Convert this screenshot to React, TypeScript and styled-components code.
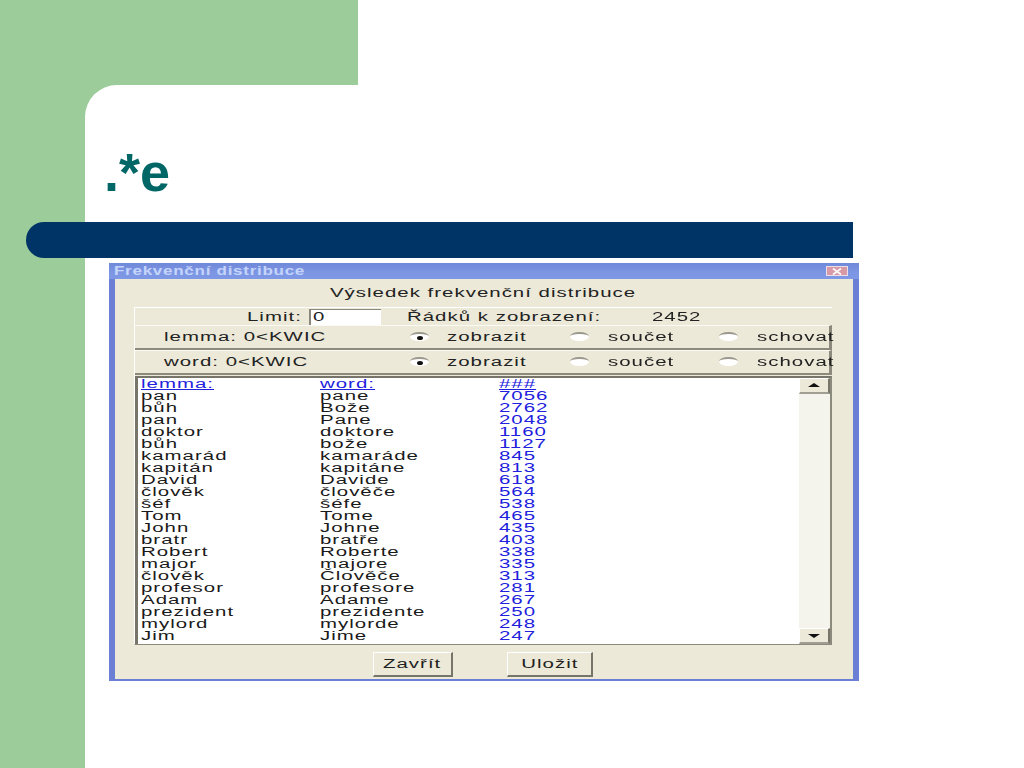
import React from "react";
import styled, { createGlobalStyle } from "styled-components";

const GlobalStyle = createGlobalStyle`
  html, body { margin: 0; padding: 0; background: #9ccc99; }
`;

const Slide = styled.div`
  display: flex;
  width: 1024px;
  height: 768px;
  overflow: hidden;
  background: #9ccc99;
  font-family: "Liberation Sans", Arial, sans-serif;
`;

const Rail = styled.div`
  flex: 0 0 85px;
`;

const Main = styled.div`
  flex: 1;
  display: flex;
  flex-direction: column;
`;

const TopRow = styled.div`
  display: flex;
  height: 85px;
`;

const TopGreen = styled.div`
  flex: 0 0 273px;
`;

const TopWhite = styled.div`
  flex: 1;
  background: #fff;
`;

const Content = styled.div`
  flex: 1;
  background: #fff;
  border-top-left-radius: 32px;
`;

const Heading = styled.h1`
  height: 137px;
  margin: 0;
  padding: 52px 0 0 19px;
  box-sizing: border-box;
  font-size: 54px;
  line-height: 70px;
  font-weight: bold;
  color: #006666;
`;

const Bar = styled.div`
  width: 827px;
  height: 36px;
  margin: 0 0 5px -59px;
  background: #003366;
  border-radius: 18px 0 0 18px;
`;

const Dialog = styled.div`
  width: 750px;
  height: 418px;
  margin-left: 24px;
  box-sizing: border-box;
  padding: 0 6px 2px 6px;
  display: flex;
  flex-direction: column;
  background: #6b80d4;
  filter: blur(0.35px);
`;

const TitleBar = styled.div`
  flex: 0 0 16px;
  margin: 0 -6px;
  padding: 0 11px 0 5px;
  display: flex;
  align-items: center;
  justify-content: space-between;
  background: linear-gradient(180deg, #7088d8, #7d96e4 60%, #7f98e6);
`;

const Text = styled.span<{ $center?: boolean }>`
  display: inline-block;
  white-space: nowrap;
  font-size: 12px;
  line-height: 12px;
  letter-spacing: 0.6px;
  transform: scaleX(1.7);
  transform-origin: ${(p) => (p.$center ? "center" : "left")};
`;

const TitleText = styled(Text)`
  font-weight: bold;
  color: #c4d4fa;
  letter-spacing: 0.5px;
  transform: scaleX(1.42);
`;

const CloseButton = styled.div`
  width: 22px;
  height: 10px;
  display: flex;
  align-items: center;
  justify-content: center;
  background: #d89aa6;
  border: 1px solid #e8dfe8;
  box-sizing: border-box;
`;

const Body = styled.div`
  flex: 1;
  padding: 0 21px 0 19px;
  display: flex;
  flex-direction: column;
  background: #ece9d8;
  color: #222;
`;

const Caption = styled.div`
  height: 28px;
  display: flex;
  align-items: center;
  justify-content: center;
  padding-top: 0;
  box-sizing: border-box;
`;

const Panel = styled.div`
  height: 338px;
  display: flex;
  flex-direction: column;
  box-sizing: border-box;
  border-top: 1px solid #fff;
  border-left: 1px solid #fff;
  border-bottom: 1px solid #8c8a7c;
`;

const LimitRow = styled.div`
  flex: 0 0 17px;
  display: grid;
  grid-template-columns: 112px 62px 72px 26px 245px 1fr;
  align-items: center;
`;

const LimitInput = styled.div`
  height: 16px;
  display: flex;
  align-items: center;
  padding-left: 2px;
  box-sizing: border-box;
  background: #fff;
  border-left: 2px solid #8a887c;
  border-top: 1px solid #8a887c;
`;

const FilterRow = styled.div`
  flex: 0 0 25px;
  display: grid;
  grid-template-columns: 246px 37px 123px 38px 111px 38px 1fr;
  align-items: center;
  box-sizing: border-box;
  padding-left: 29px;
  border-bottom: 2px solid #8c8a7c;
  border-right: 3px solid #8c8a7c;
  border-top: 1px solid #fbfaf4;
`;

const Radio = styled.div<{ $checked?: boolean }>`
  width: 19px;
  height: 9px;
  margin-top: -1px;
  display: flex;
  align-items: center;
  justify-content: center;
  box-sizing: border-box;
  border-radius: 50%;
  background: #fff;
  border-top: 2px solid #9a988c;
  border-left: 2px solid #b0ae a2;
  &::after {
    content: "";
    display: ${(p) => (p.$checked ? "block" : "none")};
    width: 6px;
    height: 4px;
    border-radius: 50%;
    background: #111;
  }
`;

const ListBox = styled.div`
  flex: 1;
  display: flex;
  margin-top: 1px;
  box-sizing: border-box;
  background: #fff;
  border-left: 3px solid #77756a;
  border-top: 2px solid #77756a;
  border-right: 2px solid #8c8a7c;
`;

const Table = styled.div`
  flex: 1;
  padding: 0 0 0 3px;
  overflow: hidden;
`;

const TableRow = styled.div`
  display: grid;
  grid-template-columns: 179px 179px 1fr;
  height: 12px;
`;

const HeadText = styled(Text)`
  color: #2222dd;
  text-decoration: underline;
`;

const Count = styled(Text)`
  color: #2020dd;
`;

const Cell = styled(Text)`
  color: #1a1a1a;
`;

const Scrollbar = styled.div`
  flex: 0 0 31px;
  display: flex;
  flex-direction: column;
  justify-content: space-between;
  background: #f5f4ec;
`;

const ScrollButton = styled.div`
  height: 16px;
  display: flex;
  align-items: center;
  justify-content: center;
  box-sizing: border-box;
  background: #ece9d8;
  border-top: 1px solid #fff;
  border-left: 1px solid #fff;
  border-right: 2px solid #77756a;
  border-bottom: 2px solid #a09e92;
`;

const Footer = styled.div`
  flex: 1;
  display: flex;
  padding: 7px 0 0 239px;
  gap: 54px;
`;

const Button = styled.div<{ $wide?: boolean }>`
  width: ${(p) => (p.$wide ? "86px" : "80px")};
  height: 25px;
  display: flex;
  align-items: center;
  justify-content: center;
  box-sizing: border-box;
  background: #ece9d8;
  border-top: 1px solid #fff;
  border-left: 1px solid #fff;
  border-right: 2px solid #77756a;
  border-bottom: 2px solid #77756a;
`;

const rows: [string, string, number][] = [
  ["pan", "pane", 7056],
  ["bůh", "Bože", 2762],
  ["pan", "Pane", 2048],
  ["doktor", "doktore", 1160],
  ["bůh", "bože", 1127],
  ["kamarád", "kamaráde", 845],
  ["kapitán", "kapitáne", 813],
  ["David", "Davide", 618],
  ["člověk", "člověče", 564],
  ["šéf", "šéfe", 538],
  ["Tom", "Tome", 465],
  ["John", "Johne", 435],
  ["bratr", "bratře", 403],
  ["Robert", "Roberte", 338],
  ["major", "majore", 335],
  ["člověk", "Člověče", 313],
  ["profesor", "profesore", 281],
  ["Adam", "Adame", 267],
  ["prezident", "prezidente", 250],
  ["mylord", "mylorde", 248],
  ["Jim", "Jime", 247],
];

function Filter({ label }: { label: string }) {
  return (
    <FilterRow>
      <Text>{label}</Text>
      <Radio $checked />
      <Text>zobrazit</Text>
      <Radio />
      <Text>součet</Text>
      <Radio />
      <Text>schovat</Text>
    </FilterRow>
  );
}

function App() {
  return (
    <>
      <GlobalStyle />
      <Slide>
        <Rail />
        <Main>
          <TopRow>
            <TopGreen />
            <TopWhite />
          </TopRow>
          <Content>
            <Heading>.*e</Heading>
            <Bar />
            <Dialog>
              <TitleBar>
                <TitleText>Frekvenční distribuce</TitleText>
                <CloseButton>
                  <svg width="10" height="7" viewBox="0 0 10 7">
                    <path d="M1 0.5 L9 6.5 M9 0.5 L1 6.5" stroke="#fff" strokeWidth="1.6" />
                  </svg>
                </CloseButton>
              </TitleBar>
              <Body>
                <Caption>
                  <Text $center>Výsledek frekvenční distribuce</Text>
                </Caption>
                <Panel>
                  <LimitRow>
                    <span />
                    <Text>Limit:</Text>
                    <LimitInput>
                      <Text>0</Text>
                    </LimitInput>
                    <span />
                    <Text>Řádků k zobrazení:</Text>
                    <Text>2452</Text>
                  </LimitRow>
                  <Filter label="lemma: 0<KWIC" />
                  <Filter label="word: 0<KWIC" />
                  <ListBox>
                    <Table>
                      <TableRow>
                        <HeadText>lemma:</HeadText>
                        <HeadText>word:</HeadText>
                        <HeadText>###</HeadText>
                      </TableRow>
                      {rows.map(([lemma, word, count]) => (
                        <TableRow key={lemma + word}>
                          <Cell>{lemma}</Cell>
                          <Cell>{word}</Cell>
                          <Count>{count}</Count>
                        </TableRow>
                      ))}
                    </Table>
                    <Scrollbar>
                      <ScrollButton>
                        <svg width="12" height="5" viewBox="0 0 12 5">
                          <path d="M6 0 L12 4 L0 4 Z" fill="#111" />
                        </svg>
                      </ScrollButton>
                      <ScrollButton>
                        <svg width="12" height="5" viewBox="0 0 12 5">
                          <path d="M0 1 L12 1 L6 5 Z" fill="#111" />
                        </svg>
                      </ScrollButton>
                    </Scrollbar>
                  </ListBox>
                </Panel>
                <Footer>
                  <Button>
                    <Text $center>Zavřít</Text>
                  </Button>
                  <Button $wide>
                    <Text $center>Uložit</Text>
                  </Button>
                </Footer>
              </Body>
            </Dialog>
          </Content>
        </Main>
      </Slide>
    </>
  );
}

export default App;
